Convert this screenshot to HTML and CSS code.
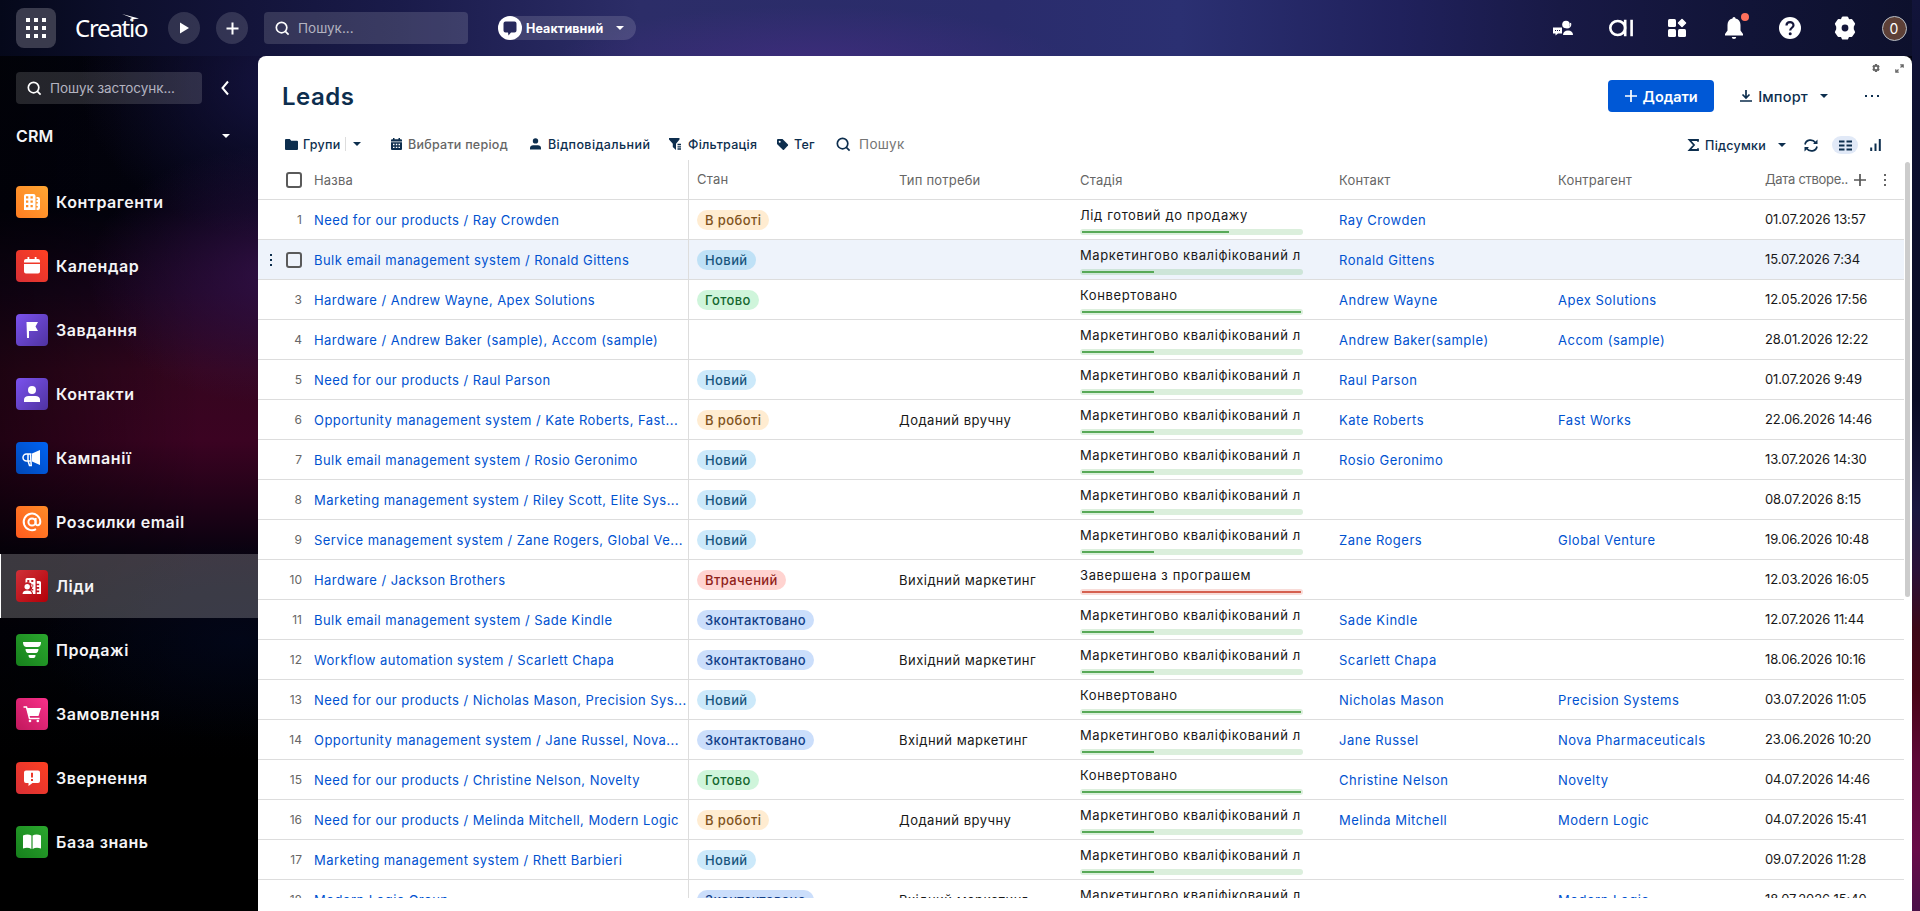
FILE: index.html
```html
<!DOCTYPE html>
<html lang="uk">
<head>
<meta charset="utf-8">
<title>Leads</title>
<link rel="stylesheet" href="styles.css">
</head>
<body>
<div class="app">
  <header class="topbar">
    <button class="apps-btn"><svg width="20" height="20" viewBox="0 0 20 20" fill="#fff"><path d="M0 0h4v4H0zM8 0h4v4H8zM16 0h4v4h-4zM0 8h4v4H0zM8 8h4v4H8zM16 8h4v4h-4zM0 16h4v4H0zM8 16h4v4H8zM16 16h4v4h-4z"/></svg></button>
    <div class="logo">Creatio<svg class="logo-bird" width="17" height="9" viewBox="0 0 17 9" fill="#fff"><path d="M0 0 17 4.500 10 5.500 8 7 8.500 4.800 10 4z"/></svg></div>
    <button class="round"><svg width="10" height="12" viewBox="0 0 10 12"><path d="M1 0.500 10 6 1 11.500z" fill="#fff"/></svg></button>
    <button class="round round-plus"><svg width="13" height="13" viewBox="0 0 13 13"><path d="M6.500 0.500v12M0.500 6.500h12" stroke="#fff" stroke-width="2"/></svg></button>
    <div class="search search-global"><svg class="lens" viewBox="0 0 16 16"><circle cx="7" cy="7" r="5.600"/><path d="M11 11l3.500 3.500"/></svg><span>Пошук...</span></div>
    <div class="status"><span class="status-icon"><svg width="14" height="16" viewBox="0 0 14 16"><path d="M2.500 0.500h9a2 2 0 0 1 2 2v7a2 2 0 0 1-2 2H8L5.500 14.500l-.5-3H2.500a2 2 0 0 1-2-2v-7a2 2 0 0 1 2-2z" fill="#282a5c"/></svg></span><b>Неактивний</b><i class="caret"></i></div>
    <nav class="top-icons">
      <button><svg width="20" height="16" viewBox="0 0 20 16" fill="#fff"><circle cx="13" cy="4.500" r="3.800"/><path d="M0 7.500h9v6H5l-2.500 2v-2H0z"/><path d="M10 15c0-3 2-4.500 5-4.500s5 1.500 5 4.500z"/><path d="M17.500 3c1 3-1 5-4 5" fill="none" stroke="#fff" stroke-width="1.200"/><path d="M2 10.500h1M4 10.500h1M6 10.500h1" stroke="#17183f" stroke-width="1.200"/></svg></button>
      <button><svg width="24" height="18" viewBox="0 0 24 18" fill="none" stroke="#fff" stroke-width="2.600"><ellipse cx="8.700" cy="9" rx="7.400" ry="7"/><path d="M16.200 .7v16.600M22.600 .7v16.600"/></svg></button>
      <button><svg width="18" height="18" viewBox="0 0 18 18" fill="#fff"><rect width="8" height="8" rx="1.500"/><rect y="10" width="8" height="8" rx="1.500"/><rect x="10" y="10" width="8" height="8" rx="1.500"/><path d="M14 .5 17.500 4 14 7.500 10.500 4z" stroke="#fff" stroke-width="1.500" stroke-linejoin="round"/></svg></button>
      <button class="bell"><svg width="18" height="22" viewBox="0 0 18 22" fill="#fff"><path d="M9 0a1.500 1.500 0 0 1 1.500 1.600C13.800 2.300 15.500 5 15.500 8v5.500L18 17v1.500H0V17l2.500-3.500V8c0-3 1.700-5.700 5-6.400A1.500 1.500 0 0 1 9 0zM6.800 20h4.400a2.200 2 0 0 1-4.400 0z"/></svg><i class="dot"></i></button>
      <button><svg width="22" height="22" viewBox="0 0 22 22"><circle cx="11" cy="11" r="11" fill="#fff"/><path d="M7.500 8.500c0-4.500 7-4.500 7-.3 0 2.500-3.300 2.600-3.300 5.300" fill="none" stroke="#15173c" stroke-width="2.200"/><circle cx="11.200" cy="16.700" r="1.500" fill="#15173c"/></svg></button>
      <button><svg width="24" height="24" viewBox="0 0 24 24"><path d="M9.800 1.500h4.400l1.300 2.800 3-.2 2.600 3.700L19.800 10.500v3l1.300 2.700-2.600 3.700-3-.2-1.300 2.800H9.800l-1.300-2.800-3 .2-2.600-3.700 1.300-2.700v-3L2.900 7.800l2.600-3.700 3 .2z" fill="#fff" stroke="#fff" stroke-width="2" stroke-linejoin="round"/><circle cx="12" cy="12" r="3.400" fill="#14163a"/></svg></button>
      <span class="avatar">0</span>
    </nav>
  </header>
  <aside class="sidebar">
    <div class="side-top">
      <div class="search search-apps"><svg class="lens" viewBox="0 0 16 16"><circle cx="7" cy="7" r="5.600"/><path d="M11 11l3.500 3.500"/></svg><span>Пошук застосунк...</span></div>
      <svg width="8" height="14" viewBox="0 0 8 14"><path d="M7 .5 1.500 7 7 13.500" fill="none" stroke="#fff" stroke-width="2"/></svg>
    </div>
    <div class="workplace"><span>CRM</span><i class="caret"></i></div>
    <nav class="menu">
      <a class="item"><span class="tile orange"><svg viewBox="0 0 32 32"><path fill="#fff" fill-rule="evenodd" d="M10 8h7.500a2 2 0 0 1 2 2v14H8V10a2 2 0 0 1 2-2zM10 10.200v2.300h2.300v-2.300zm4.500 0v2.300h2.300v-2.300zM10 14.500v2.300h2.300v-2.300zm4.500 0v2.300h2.300v-2.300zM10 19v2.300h2.300V19zm4.500 0v2.300h2.300V19zM20.500 11H22a2 2 0 0 1 2 2v9a2 2 0 0 1-2 2h-1.500v-2.500h1.300V20h-1.300v-2.500h1.300V16h-1.300v-2h1.300v-1.300h-1.300z"/></svg></span>Контрагенти</a>
      <a class="item"><span class="tile red"><svg viewBox="0 0 32 32"><path fill="#fff" d="M11.500 7h1.800v2h5.400V7h1.800v2H22a2 2 0 0 1 2 2v1.500H8V11a2 2 0 0 1 2-2h1.500zM8 14h16v7.500a2 2 0 0 1-2 2H10a2 2 0 0 1-2-2z"/></svg></span>Календар</a>
      <a class="item"><span class="tile violet"><svg viewBox="0 0 32 32"><path fill="#fff" d="M10.500 8H22l-2.500 4.500 2.500 4.500h-9v7h-2z"/></svg></span>Завдання</a>
      <a class="item"><span class="tile violet"><svg viewBox="0 0 32 32"><circle cx="16" cy="12" r="4" fill="#fff"/><path fill="#fff" d="M8 24v-2.500c0-2 2-3.500 4.500-3.500h7c2.500 0 4.500 1.500 4.500 3.500V24z"/></svg></span>Контакти</a>
      <a class="item"><span class="tile blue"><svg viewBox="0 0 32 32"><path fill="#fff" d="M24 8v15l-8-3.500v-8z"/><path d="M15.500 12H10.500a3 3 0 0 0 0 7h5M12 12v7l1.500 4.500h1.700L14.500 12" fill="none" stroke="#fff" stroke-width="1.500"/></svg></span>Кампанії</a>
      <a class="item"><span class="tile mail"><svg viewBox="0 0 32 32" fill="none" stroke="#fff" stroke-width="2"><circle cx="16" cy="16" r="3.600"/><path d="M19.600 12v5c0 3.300 4.700 3 4.700-1.300a8.300 8.300 0 1 0-4.300 7.500"/></svg></span>Розсилки email</a>
      <a class="item active"><span class="tile crimson"><svg viewBox="0 0 32 32"><path fill="#fff" fill-rule="evenodd" d="M11 8h7a1.500 1.500 0 0 1 1.500 1.500V24H17c0-2-1-3-2.500-3.700a4.500 4.500 0 0 0-5-7.500V9.500A1.500 1.500 0 0 1 11 8zm.3 2v2h2v-2zm4 0v2h2v-2zm0 4.500v2.200h2v-2.200zm0 4.500v1.500h2V19zM20.800 11h2.700a1.500 1.500 0 0 1 1.500 1.500V24h-4.200v-1.800h2.400v-1.700h-2.400v-1.800h2.400V17h-2.400v-1.700h2.400v-1.500h-2.400z"/><circle cx="11.200" cy="16.700" r="2.700" fill="#fff"/><path fill="#fff" d="M6.500 24c0-2.500 2-3.500 4.700-3.500s4.700 1 4.700 3.500z"/></svg></span>Ліди</a>
      <a class="item"><span class="tile green"><svg viewBox="0 0 32 32" fill="#fff"><path d="M7 8h18c0 2.700-1 5-3 5H10C8 13 7 10.700 7 8zM9.500 15h13c0 2.300-1 4-2.500 4h-8c-1.500 0-2.500-1.700-2.500-4zM12.500 21h7c0 1.700-.5 3-2 3h-3c-1.500 0-2-1.300-2-3z"/></svg></span>Продажі</a>
      <a class="item"><span class="tile pink"><svg viewBox="0 0 32 32"><path fill="#fff" d="M10.500 10H25l-2.500 8H13z"/><path d="M7.500 9H10.500L13.500 20.500H23.500" fill="none" stroke="#fff" stroke-width="1.500"/><circle cx="14" cy="23" r="1.300" fill="#fff"/><circle cx="21.800" cy="23" r="1.300" fill="#fff"/></svg></span>Замовлення</a>
      <a class="item"><span class="tile red"><svg viewBox="0 0 32 32"><path fill="#fff" d="M10 8.500h12a2 2 0 0 1 2 2v8.500a2 2 0 0 1-2 2h-5.500L12.500 24v-3H10a2 2 0 0 1-2-2v-8.500a2 2 0 0 1 2-2z"/><path d="M16 10.800v4.700M16 17v2" stroke="#ec3a2b" stroke-width="2"/></svg></span>Звернення</a>
      <a class="item"><span class="tile green"><svg viewBox="0 0 32 32" fill="#fff"><path d="M7 9.500c3-1.500 6-1.500 8.400 0V23C13 21.500 10 21.500 7 22.500zM25 9.500c-3-1.500-6-1.500-8.400 0V23c2.400-1.500 5.400-1.500 8.400-.5z"/></svg></span>База знань</a>
    </nav>
  </aside>
  <main class="panel">
    <div class="corner">
      <svg width="8" height="8" viewBox="0 0 24 24"><path d="M9 0h6l1 4 4-1 3 5-3 4 3 4-3 5-4-1-1 4H9l-1-4-4 1-3-5 3-4-3-4 3-5 4 1z" fill="#666"/><circle cx="12" cy="12" r="4" fill="#fff"/></svg>
      <svg width="9" height="9" viewBox="0 0 9 9"><path d="M5.200.8h3v3M8 1 5.500 3.500M.8 5.200v3h3M1 8l2.500-2.500" fill="none" stroke="#666" stroke-width="1.200"/></svg>
    </div>
    <div class="title-row">
      <h1>Leads</h1>
      <button class="add"><svg width="12" height="12" viewBox="0 0 12 12"><path d="M6 0v12M0 6h12" stroke="#fff" stroke-width="1.700"/></svg>Додати</button>
      <button class="import"><svg width="12" height="12" viewBox="0 0 12 12"><path d="M6 0v7.500M2.500 4.500 6 8l3.500-3.500M0 11h12" fill="none" stroke="#0d2e4e" stroke-width="1.700"/></svg><span>Імпорт</span><i class="caret dark"></i></button>
      <span class="more"><i></i><i></i><i></i></span>
    </div>
    <div class="toolbar">
      <button class="t-groups"><svg width="13" height="11" viewBox="0 0 13 11" fill="#0d2e4e"><path d="M1 0h3.800l1.400 1.800H12a1 1 0 0 1 1 1V10a1 1 0 0 1-1 1H1a1 1 0 0 1-1-1V1a1 1 0 0 1 1-1z"/></svg><span>Групи</span><s class="bar"></s><i class="caret dark"></i></button>
      <button class="t-period"><svg width="11" height="12" viewBox="0 0 11 12"><path fill="#0d2e4e" d="M2 0h1.500v1.200h4V0H9v1.200h1a1 1 0 0 1 1 1v1.300H0V2.200a1 1 0 0 1 1-1h1zM0 4.200h11V11a1 1 0 0 1-1 1H1a1 1 0 0 1-1-1z"/><path d="M2 6.500h1.500M4.800 6.500h1.500M7.500 6.500H9M2 9.300h1.500M4.800 9.300h1.500M7.500 9.300H9" stroke="#fff" stroke-width="1.300"/></svg><span>Вибрати період</span></button>
      <button class="t-owner"><svg width="11" height="12" viewBox="0 0 11 12" fill="#0d2e4e"><circle cx="5.500" cy="2.900" r="2.700"/><path d="M0 11.500V10c0-1.700 1.500-2.700 3-2.700h5c1.500 0 3 1 3 2.700v1.500z"/></svg><span>Відповідальний</span></button>
      <button class="t-filter"><svg width="13" height="12" viewBox="0 0 13 12"><path fill="#0d2e4e" d="M0 0h10.500v1.500L7 5.800V12L3.800 9V5.800L0 1.500z"/><path d="M8.500 6.500H12M8.500 8.800H12M8.500 11H12" stroke="#0d2e4e" stroke-width="1.300"/></svg><span>Фільтрація</span></button>
      <button class="t-tag"><svg width="11" height="11" viewBox="0 0 11 11"><path fill="#0d2e4e" d="M1 0h4.500L11 5.500a1 1 0 0 1 0 1L7 10.700a1 1 0 0 1-1.200 0L0 5V1a1 1 0 0 1 1-1z"/><circle cx="2.700" cy="2.800" r="1" fill="#fff"/></svg><span>Тег</span></button>
      <div class="t-search"><svg class="lens dark" viewBox="0 0 16 16"><circle cx="7" cy="7" r="5.600"/><path d="M11 11l3.500 3.500"/></svg><span>Пошук</span></div>
      <div class="t-right">
        <button class="t-sum"><svg width="11" height="12" viewBox="0 0 11 12"><path d="M10 2.800V1H1.500L6 6l-4.500 5H10V9.200" fill="none" stroke="#0d2e4e" stroke-width="1.800"/></svg><span>Підсумки</span><i class="caret dark"></i></button>
        <button><svg width="14" height="13" viewBox="0 0 14 13"><path d="M1 5.500C2 .5 8.500-.5 11.500 3.700M13 7.500c-1 5-7.500 6-10.500 1.800" fill="none" stroke="#0d2e4e" stroke-width="1.700"/><path d="M13.500.5V5H9zM.5 12.500V8H5z" fill="#0d2e4e"/></svg></button>
        <button class="list-mode"><svg width="13" height="11" viewBox="0 0 13 11"><path d="M0 1.500h5.500M7.500 1.500H13M0 5.500h5.500M7.500 5.500H13M0 9.500h5.500M7.500 9.500H13" stroke="#0d2e4e" stroke-width="2.200"/></svg></button>
        <button class="chart"><svg width="11" height="12" viewBox="0 0 11 12"><path d="M1.200 8.500V12M5.500 4.500V12M9.800 0v12" stroke="#0d2e4e" stroke-width="2"/></svg></button>
      </div>
    </div>
    <section class="grid">
      <div class="row head">
        <span class="c-sel"><i class="check"></i></span><span class="c-name">Назва</span><span class="c-state">Стан</span><span>Тип потреби</span><span>Стадія</span><span>Контакт</span><span>Контрагент</span>
        <span class="c-date"><span class="date-label">Дата створе..</span><svg width="12" height="12" viewBox="0 0 12 12"><path d="M6 0v12M0 6h12" stroke="#555" stroke-width="1.700"/></svg><svg class="dots" width="2" height="12" viewBox="0 0 2 12"><path d="M0 0h2v2H0zM0 5h2v2H0zM0 10h2v2H0z" fill="#666"/></svg></span>
      </div>
      <div id="rows"></div>
    </section>
    <i class="scrollbar"></i>
  </main>
</div>
<script src="rows.js"></script>
</body>
</html>
```
FILE: styles.css
```css
* { box-sizing: border-box; }
body { margin: 0; overflow: hidden; font-family: Inter, "Noto Sans", sans-serif; font-size: 13px; }
button { border: 0; background: none; padding: 0; margin: 0; font: inherit; color: inherit; display: flex; align-items: center; letter-spacing: inherit; }
svg { display: block; flex: none; overflow: visible; }
.app {
  width: 1920px; height: 911px; display: grid;
  grid-template: 56px 855px / 258px 1654px 8px;
  background:
    linear-gradient(180deg, #12143a 0, #0d1030 120px, #0a0c24 400px, #1a1740 510px, #2a1038 570px, #3d0818 630px, #480516 690px, #5e0838 760px, #680b48 850px, #4a1048 911px) right / 8px 100% no-repeat,
    radial-gradient(ellipse 260px 60px at 810px 66px, rgba(68, 44, 130, .75), transparent),
    linear-gradient(90deg, #05081a 0, #0d0f2c 120px, #13143a 250px, #1a1b4a 400px, #2c2d68 640px, #2a2c6c 1000px, #2b3072 1180px, #20215c 1400px, #181945 1560px, #111437 1750px, #0d102c 1920px) top / 100% 56px no-repeat,
    radial-gradient(ellipse 190px 130px at 278px 275px, rgba(58, 20, 84, .7), transparent),
    radial-gradient(ellipse 210px 160px at 290px 80px, rgba(26, 24, 78, .8), transparent),
    radial-gradient(ellipse 200px 100px at 240px 640px, rgba(3, 9, 32, .6), transparent),
    linear-gradient(90deg, rgba(0, 0, 0, .45), transparent 200px),
    linear-gradient(180deg, #03040f 0, #02020e 210px, #18041c 290px, #35061f 370px, #3b0322 440px, #220218 500px, #0a0210 550px, #01020a 640px, #000 760px);
}
.topbar { grid-column: 1 / -1; display: flex; align-items: center; color: #fff; padding-left: 16px; }
.apps-btn { width: 40px; height: 40px; border-radius: 8px; background: #3a3b4d; justify-content: center; }
.logo { position: relative; width: 74px; margin-left: 19px; font-family: "Noto Sans", sans-serif; font-size: 24px; letter-spacing: -1.250px; line-height: 30px; }
.logo-bird { position: absolute; left: 47px; top: 1px; }
.round { width: 32px; height: 32px; margin-left: 19px; border-radius: 50%; background: rgba(255, 255, 255, .14); justify-content: center; }
.round-plus { margin-left: 16px; }
.search { display: flex; align-items: center; border-radius: 4px; background: rgba(255, 255, 255, .14); color: #b3b3c0; height: 32px; padding-left: 11px; gap: 8px; }
.search-global { width: 204px; margin-left: 16px; font-size: 13.500px; }
.search-apps { width: 186px; font-size: 13.500px; letter-spacing: -.05px; }
.lens { width: 15px; height: 15px; fill: none; stroke: #fff; stroke-width: 1.800; }
.lens.dark { stroke: #0d2e4e; }
.status { margin-left: 30px; width: 138px; height: 24px; border-radius: 12px; background: rgba(255, 255, 255, .14); display: flex; align-items: center; font-size: 12.500px; }
.status b { margin-left: 4px; width: 78px; font-weight: 700; letter-spacing: .1px; }
.status-icon { width: 24px; height: 24px; border-radius: 50%; background: #fff; display: flex; align-items: center; justify-content: center; padding-top: 2px; }
.caret { border: 4px solid transparent; border-top-color: #fff; border-bottom: 0; }
.status .caret { margin-left: 12px; }
.caret.dark { border-top-color: #0d2e4e; }
.top-icons { margin-left: auto; display: grid; grid-template-columns: 58px 57px 56px 57px 55px 56px 42px; justify-items: center; align-items: center; width: 386px; }
.bell { position: relative; }
.dot { position: absolute; right: -6px; top: -4px; width: 8px; height: 8px; border-radius: 50%; background: #ff705c; }
.avatar { width: 25px; height: 25px; border: 1px solid #b9c0c8; border-radius: 50%; background: #5d4037; display: flex; align-items: center; justify-content: center; font-size: 14px; }

.sidebar { color: #f4f4f6; }
.side-top { display: flex; align-items: center; gap: 19px; padding: 16px 0 0 16px; }
.workplace { display: flex; align-items: center; justify-content: space-between; padding: 0 28px 2px 16px; height: 66px; font-size: 16px; font-weight: 600; letter-spacing: .1px; }
.item { display: flex; align-items: center; gap: 8px; height: 64px; padding-left: 16px; font-size: 16px; font-weight: 600; letter-spacing: .55px; }
.active { background: rgba(255, 255, 255, .22); border-left: 1px solid #fff; padding-left: 15px; }
.tile { width: 32px; height: 32px; border-radius: 4px; }
.orange { background: linear-gradient(45deg, #ff7d22, #ffa733); }
.red { background: linear-gradient(45deg, #d82f35, #ff4022); }
.violet { background: linear-gradient(135deg, #7b52ee, #4f33a0); }
.blue { background: linear-gradient(45deg, #0048b5, #0063f5); }
.mail { background: linear-gradient(45deg, #ff5a1e, #ff8c28); }
.crimson { background: linear-gradient(135deg, #cf3038, #b30008); }
.green { background: linear-gradient(45deg, #16801c, #2ba82e); }
.pink { background: linear-gradient(45deg, #c0185c, #fa308a); }

.panel { position: relative; background: #fff; border-radius: 8px 8px 0 0; color: #0d2e4e; }
.corner { display: flex; justify-content: flex-end; align-items: center; gap: 15px; height: 24px; padding-right: 8px; }
.title-row { display: flex; align-items: center; height: 32px; padding-left: 24px; }
h1 { margin: 0 auto 0 0; font-size: 24px; font-weight: 600; letter-spacing: .5px; }
.add { width: 106px; height: 32px; background: #0058d6; color: #fff; border-radius: 4px; justify-content: center; gap: 6px; font-size: 14.500px; font-weight: 600; }
.import { margin-left: 26px; gap: 6px; font-size: 14.500px; font-weight: 500; letter-spacing: .2px; }
.import .caret { margin-left: 6px; }
.more { display: flex; gap: 4px; margin: 0 33px 0 37px; }
.more i { width: 2px; height: 2px; background: #0d2e4e; }
.toolbar { display: flex; align-items: center; height: 24px; margin-top: 20px; padding-left: 27px; font-weight: 500; font-size: 12.500px; letter-spacing: .25px; }
.toolbar button { gap: 6px; }
.t-groups { width: 106px; }
.toolbar .t-groups { gap: 5px; }
.t-groups .caret { margin-left: 2px; }
.bar { width: 1px; height: 14px; background: #ddd; }
.t-period { width: 139px; color: #666; }
.t-owner { width: 139px; letter-spacing: .4px; }
.t-owner span { margin-left: 1px; }
.t-filter { width: 108px; }
.t-tag { width: 59px; }
.t-search { display: flex; align-items: center; gap: 8px; color: #757575; font-size: 13.500px; font-weight: 400; letter-spacing: .35px; }
.t-right { margin-left: auto; display: flex; align-items: center; padding: 2px 31px 0 0; }
.t-sum { margin-right: 18px; }
.t-sum .caret { margin-left: 6px; }
.toolbar .list-mode { width: 26px; height: 18px; border-radius: 9px; background: #e1e9f7; justify-content: center; margin: 0 12px 0 14px; }

.grid { height: 738px; width: 1646px; margin-top: 4px; overflow: hidden; }
.row { display: grid; grid-template-columns: 56px 375px 210px 181px 259px 219px 207px 139px; height: 40px; align-items: center; border-bottom: 1px solid #ddd; color: #181818; white-space: nowrap; font-weight: 400; letter-spacing: .5px; }
.row > * { height: 39px; line-height: 41px; }
.head { color: #666; letter-spacing: .2px; }
.c-sel { display: flex; align-items: center; justify-content: flex-end; padding-right: 12px; font-size: 12px; color: #666; position: relative; letter-spacing: 0; }
.check { width: 16px; height: 16px; border: 2px solid #5a5a5a; border-radius: 3px; }
.c-name { border-right: 1px solid #ddd; overflow: hidden; letter-spacing: .45px; }
.head .c-name { letter-spacing: .2px; }
.c-state { padding-left: 8px; display: flex; align-items: center; }
.c-date { display: flex; align-items: center; }
.row:not(.head) .c-date { letter-spacing: -.1px; }
.date-label { width: 89px; letter-spacing: -.3px; }
.head .dots { margin-left: 18px; }
.row a { color: #0052d0; }
.hover { background: #eef3fb; }
.hover .dots { position: absolute; left: 12px; top: 14px; margin: 0; }
.chip { height: 20px; line-height: 21px; border-radius: 10px; padding: 0 8px; font-weight: 500; letter-spacing: .4px; }
.chip.work { background: #ffecd1; color: #80531d; }
.chip.new { background: #cce9fa; color: #17557d; }
.hover .chip.new { background: #bfe1f6; }
.chip.done { background: #cff5db; color: #14672f; }
.chip.lost { background: #ffd3d0; color: #8f2119; }
.chip.contacted { background: #cbdefb; color: #123f88; }
.stage { width: 223px; letter-spacing: .62px; }
.stage-text { height: 29px; line-height: 31px; overflow: hidden; }
.track { height: 6px; padding: 2px; border-radius: 3px; background: rgba(76, 175, 80, .2); }
.track b { display: block; height: 2px; background: #57a957; }
.track.bad { background: rgba(220, 80, 60, .2); }
.track.bad b { background: #d5604f; }
.scrollbar { position: absolute; left: 1647px; top: 106px; width: 5px; height: 435px; border-radius: 3px; background: #ccc; }
```
FILE: rows.js
```js
const MQL = "Маркетингово кваліфікований л";
const STATES = { "В роботі": "work", "Новий": "new", "Готово": "done", "Втрачений": "lost", "Зконтактовано": "contacted" };
const PROGRESS = { [MQL]: 33, "Лід готовий до продажу": 67, "Конвертовано": 100, "Завершена з програшем": 100 };
const leads = [
  ["Need for our products / Ray Crowden", "В роботі", "", "Лід готовий до продажу", "Ray Crowden", "", "01.07.2026 13:57"],
  ["Bulk email management system / Ronald Gittens", "Новий", "", MQL, "Ronald Gittens", "", "15.07.2026 7:34"],
  ["Hardware / Andrew Wayne, Apex Solutions", "Готово", "", "Конвертовано", "Andrew Wayne", "Apex Solutions", "12.05.2026 17:56"],
  ["Hardware / Andrew Baker (sample), Accom (sample)", "", "", MQL, "Andrew Baker(sample)", "Accom (sample)", "28.01.2026 12:22"],
  ["Need for our products / Raul Parson", "Новий", "", MQL, "Raul Parson", "", "01.07.2026 9:49"],
  ["Opportunity management system / Kate Roberts, Fast...", "В роботі", "Доданий вручну", MQL, "Kate Roberts", "Fast Works", "22.06.2026 14:46"],
  ["Bulk email management system / Rosio Geronimo", "Новий", "", MQL, "Rosio Geronimo", "", "13.07.2026 14:30"],
  ["Marketing management system / Riley Scott, Elite Sys...", "Новий", "", MQL, "", "", "08.07.2026 8:15"],
  ["Service management system / Zane Rogers, Global Ve...", "Новий", "", MQL, "Zane Rogers", "Global Venture", "19.06.2026 10:48"],
  ["Hardware / Jackson Brothers", "Втрачений", "Вихідний маркетинг", "Завершена з програшем", "", "", "12.03.2026 16:05"],
  ["Bulk email management system / Sade Kindle", "Зконтактовано", "", MQL, "Sade Kindle", "", "12.07.2026 11:44"],
  ["Workflow automation system / Scarlett Chapa", "Зконтактовано", "Вихідний маркетинг", MQL, "Scarlett Chapa", "", "18.06.2026 10:16"],
  ["Need for our products / Nicholas Mason, Precision Sys...", "Новий", "", "Конвертовано", "Nicholas Mason", "Precision Systems", "03.07.2026 11:05"],
  ["Opportunity management system / Jane Russel, Nova...", "Зконтактовано", "Вхідний маркетинг", MQL, "Jane Russel", "Nova Pharmaceuticals", "23.06.2026 10:20"],
  ["Need for our products / Christine Nelson, Novelty", "Готово", "", "Конвертовано", "Christine Nelson", "Novelty", "04.07.2026 14:46"],
  ["Need for our products / Melinda Mitchell, Modern Logic", "В роботі", "Доданий вручну", MQL, "Melinda Mitchell", "Modern Logic", "04.07.2026 15:41"],
  ["Marketing management system / Rhett Barbieri", "Новий", "", MQL, "", "", "09.07.2026 11:28"],
  ["Modern Logic Group", "Зконтактовано", "Вхідний маркетинг", MQL, "", "Modern Logic", "18.07.2026 15:40"]
];
const hovered = 1;
document.getElementById("rows").innerHTML = leads.map(([name, state, need, stage, contact, account, date], i) => `
  <div class="row${i === hovered ? " hover" : ""}">
    <span class="c-sel">${i === hovered ? '<svg class="dots" width="2" height="12" viewBox="0 0 2 12"><path d="M0 0h2v2H0zM0 5h2v2H0zM0 10h2v2H0z" fill="#0d2e4e"/></svg><i class="check"></i>' : i + 1}</span>
    <a class="c-name">${name}</a>
    <span class="c-state">${state ? `<span class="chip ${STATES[state]}">${state}</span>` : ""}</span>
    <span>${need}</span>
    <div class="stage"><div class="stage-text">${stage}</div><div class="track${stage.startsWith("Завершена") ? " bad" : ""}"><b style="width:${PROGRESS[stage]}%"></b></div></div>
    <a>${contact}</a><a>${account}</a><span class="c-date">${date}</span>
  </div>`).join("");
```
